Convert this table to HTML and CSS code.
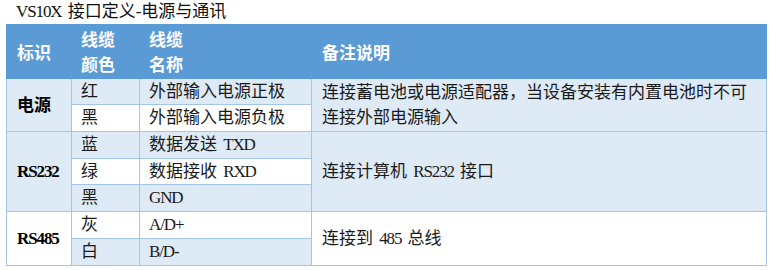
FILE: index.html
```html
<!DOCTYPE html>
<html lang="zh-CN">
<head>
<meta charset="utf-8">
<title>VS10X 接口定义</title>
<link rel="stylesheet" href="styles.css">
</head>
<body>
<div class="page">
  <div class="title"><span class="en">VS10X </span>接口定义-电源与通讯</div>
  <table class="spec">
    <colgroup>
      <col class="c1"><col class="c2"><col class="c3"><col class="c4">
    </colgroup>
    <thead>
      <tr>
        <th>标识</th>
        <th>线缆<br>颜色</th>
        <th>线缆<br>名称</th>
        <th class="note">备注说明</th>
      </tr>
    </thead>
    <tbody>
      <tr class="short">
        <td rowspan="2" class="id lt">电源</td>
        <td class="lt">红</td>
        <td class="lt">外部输入电源正极</td>
        <td rowspan="2" class="lt note">连接蓄电池或电源适配器，当设备安装有内置电池时不可<br>连接外部电源输入</td>
      </tr>
      <tr>
        <td>黑</td>
        <td>外部输入电源负极</td>
      </tr>
      <tr>
        <td rowspan="3" class="id lt"><span class="en">RS232</span></td>
        <td class="lt">蓝</td>
        <td class="lt">数据发送<span class="en"> TXD</span></td>
        <td rowspan="3" class="lt note">连接计算机<span class="en"> RS232 </span>接口</td>
      </tr>
      <tr class="short">
        <td>绿</td>
        <td>数据接收<span class="en"> RXD</span></td>
      </tr>
      <tr>
        <td class="lt">黑</td>
        <td class="lt"><span class="en">GND</span></td>
      </tr>
      <tr>
        <td rowspan="2" class="id"><span class="en">RS485</span></td>
        <td>灰</td>
        <td><span class="en">A/D+</span></td>
        <td rowspan="2" class="note">连接到<span class="en"> 485 </span>总线</td>
      </tr>
      <tr>
        <td class="lt">白</td>
        <td class="lt"><span class="en">B/D-</span></td>
      </tr>
    </tbody>
  </table>
</div>
</body>
</html>
```

FILE: styles.css
```css
html, body {
  margin: 0;
  padding: 0;
  background: #ffffff;
}

body {
  font-family: "Liberation Serif", "Noto Sans CJK SC", serif;
  font-size: 17px;
  color: #1a1a1a;
}

.page {
  padding: 0 4px 0 6px;
}

.en {
  font-family: "Liberation Serif", serif;
  font-size: 17px;
  letter-spacing: -1.1px;
  word-spacing: 3px;
}

.title {
  height: 24px;
  line-height: 24px;
  padding-left: 10px;
  color: #111111;
  white-space: nowrap;
}

.spec {
  border-collapse: collapse;
  table-layout: fixed;
  width: 760px;
}

.c1 { width: 65px; }
.c2 { width: 68px; }
.c3 { width: 172px; }
.c4 { width: 455px; }

.spec th {
  background: #5b9bd5;
  color: #ffffff;
  font-weight: bold;
  text-align: left;
  vertical-align: middle;
  line-height: 25px;
  padding: 3px 9px 0 9px;
  height: 50px;
  border: 1px solid #5b9bd5;
  white-space: nowrap;
}

.spec th:first-child {
  padding-left: 10px;
}

.spec td {
  border: 1px solid #a3c6e8;
  line-height: 26px;
  padding: 0 9px;
  vertical-align: middle;
  white-space: nowrap;
  background: #ffffff;
}

.spec tr.short td {
  line-height: 25px;
}

.spec td.note {
  line-height: 26px;
}

.spec td.lt {
  background: #deeaf6;
}

.spec td.id {
  padding-left: 10px;
  font-weight: bold;
  color: #000000;
}

.spec td.note,
.spec th.note {
  padding-left: 10px;
}
```
